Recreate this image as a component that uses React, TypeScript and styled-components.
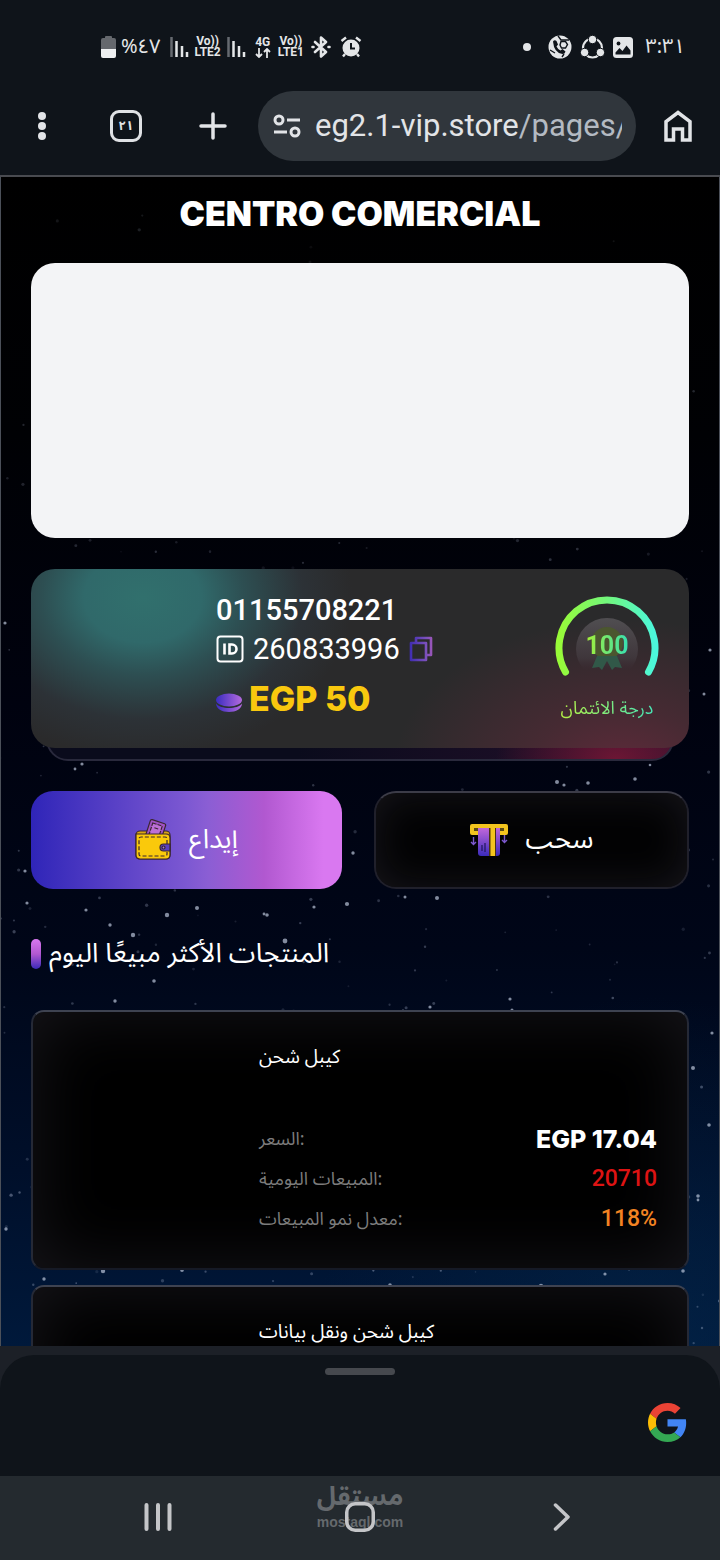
import React from 'react';
import styled, { createGlobalStyle } from 'styled-components';

const arabic = '"Noto Sans Arabic", "DejaVu Sans", sans-serif';

const GlobalStyle = createGlobalStyle`
  *, *::before, *::after { box-sizing: border-box; }
  body { margin: 0; background: #0f141a; color: #fff; font-family: Roboto, ${arabic}; }
  h1, h2, h3, p, dl, dd, dt, ul { margin: 0; padding: 0; font-weight: 400; }
  button { border: 0; padding: 0; background: none; color: inherit; font: inherit; cursor: pointer; }
  svg { display: block; }
`;

const Shell = styled.div`
  display: flex;
  flex-direction: column;
  height: 100vh;
  overflow: hidden;
`;

/* System status bar */
const StatusBar = styled.header`
  display: flex;
  justify-content: space-between;
  align-items: center;
  flex: none;
  height: 90px;
  padding: 4px 35px 0 101px;
  color: #e4e6e8;
`;

const StatusGroup = styled.div<{ $gap: number }>`
  display: flex;
  align-items: center;
  gap: ${(p) => p.$gap}px;
`;

const StatusText = styled.span`
  font: 400 20px/28px ${arabic};
`;

const NetworkLabel = styled.span`
  display: flex;
  flex-direction: column;
  align-items: center;
  font: 700 12px/11px Roboto, sans-serif;
`;

/* Browser toolbar */
const Toolbar = styled.nav`
  display: grid;
  grid-template-columns: 84px 84px 90px 1fr 84px;
  align-items: center;
  flex: none;
  height: 87px;
  padding-bottom: 14px;
  border-bottom: 2px solid #494b50;
`;

const IconButton = styled.button`
  display: grid;
  place-items: center;
  height: 70px;
  color: #e2e4e7;
`;

const TabCount = styled.span`
  display: grid;
  place-items: center;
  width: 32px;
  height: 32px;
  border: 3px solid #dfe1e4;
  border-radius: 9px;
  font: 700 13px/20px ${arabic};
`;

const AddressBar = styled.div`
  display: flex;
  align-items: center;
  gap: 14px;
  height: 70px;
  min-width: 0;
  padding: 0 14px 0 15px;
  border-radius: 35px;
  background: #30363c;
  color: #e2e4e7;
`;

const Url = styled.span`
  flex: 1;
  min-width: 0;
  overflow: hidden;
  white-space: nowrap;
  font-size: 31px;
  line-height: 40px;
`;

const UrlPath = styled.span`
  color: #b4bac2;
`;

/* Web page */
const Page = styled.main`
  position: relative;
  isolation: isolate;
  flex: 1;
  min-height: 0;
  overflow: hidden;
  padding: 0 30px;
  border: solid #4b5059;
  border-width: 0 1px;
  background: linear-gradient(#000 0%, #000104 22%, #00020f 45%, #000618 66%, #000f2a 85%, #00193b 100%);
`;

const Sky = styled.svg`
  position: absolute;
  inset: 0;
  z-index: -1;
  width: 100%;
  height: 100%;
`;

const Title = styled.h1`
  padding: 15px 0 27px;
  text-align: center;
  white-space: nowrap;
  font: 900 34px/44px Inter, sans-serif;
`;

const Banner = styled.div`
  height: 275px;
  border-radius: 24px;
  background: #f3f4f6;
`;

const AccountWrap = styled.section`
  position: relative;
  margin-top: 31px;
  padding-bottom: 13px;
`;

const AccountBase = styled.div`
  position: absolute;
  z-index: -1;
  inset: 60px 15px 0;
  border: 2px solid #29293c;
  border-radius: 22px;
  background: radial-gradient(ellipse 120px 70px at 91% 100%, #6c1634, transparent),
    linear-gradient(90deg, #0a0b1c 40%, #26102c);
`;

const AccountCard = styled.div`
  display: flex;
  justify-content: space-between;
  height: 179px;
  padding: 22px 30px 0 185px;
  border-radius: 24px;
  background: radial-gradient(ellipse 210px 160px at 17% 16%, #31706d 0%, #30696a 28%, rgba(46, 88, 92, 0.8) 48%, rgba(46, 56, 64, 0.55) 76%, transparent 100%),
    radial-gradient(ellipse 230px 150px at 90% 112%, #5f2a3a 0%, rgba(82, 42, 54, 0.7) 40%, transparent 100%),
    #2a2a2b;
`;

const AccountInfo = styled.div`
  display: flex;
  flex-direction: column;
`;

const Phone = styled.p`
  font-weight: 500;
  font-size: 29px;
  line-height: 38px;
`;

const UserId = styled.p`
  display: flex;
  align-items: center;
  gap: 9px;
  font-size: 29px;
  line-height: 40px;
`;

const Balance = styled.p`
  display: flex;
  align-items: center;
  gap: 7px;
  padding-top: 10px;
  color: #f9c80e;
  font: 800 34px/40px Inter, sans-serif;
`;

const Credit = styled.div`
  display: flex;
  flex-direction: column;
  align-items: center;
  width: 104px;
  padding-top: 5px;
`;

const Gauge = styled.div`
  display: grid;
  place-items: center;
  height: 100px;

  > * { grid-area: 1 / 1; }
`;

const Score = styled.span`
  background: linear-gradient(90deg, #a8f034, #35dfb4);
  background-clip: text;
  color: transparent;
  font: 700 25px/40px Roboto, sans-serif;
`;

const CreditLabel = styled.span`
  white-space: nowrap;
  background: linear-gradient(90deg, #b4ef45, #48e6b6);
  background-clip: text;
  color: transparent;
  font: 400 18px/24px ${arabic};
`;

const Actions = styled.div`
  display: grid;
  grid-template-columns: 311fr 315fr;
  gap: 32px;
  margin-top: 30px;
`;

const ActionButton = styled.button<{ $primary?: boolean }>`
  display: flex;
  align-items: center;
  justify-content: center;
  gap: 18px;
  height: 98px;
  border-radius: 22px;
  font: 400 27px/36px ${arabic};
  ${(p) =>
    p.$primary
      ? `background: linear-gradient(90deg, #2f25b8 0%, #7c58d2 50%, #8b5ed4 57%, #b158d0 75%, #d978f0 94%);`
      : `border: 2px solid #20202b;
         border-top-color: #3c3c48;
         background: #030304;
         box-shadow: inset 0 0 40px #17161c;`}
`;

const SectionTitle = styled.h2`
  display: flex;
  align-items: center;
  gap: 8px;
  margin: 43px 0 34px;
  font: 400 27px/44px ${arabic};

  &::before {
    content: '';
    width: 10px;
    height: 30px;
    border-radius: 5px;
    background: linear-gradient(#d978f0, #b158d0 50%, #3a2ab8);
  }
`;

const ProductList = styled.ul`
  display: grid;
  gap: 15px;
  list-style: none;
`;

const ProductCard = styled.li`
  display: grid;
  grid-template-columns: 196px 1fr;
  height: 260px;
  padding: 29px 30px;
  border: 2px solid #252936;
  border-top-color: #3e4351;
  border-bottom-color: #161a26;
  border-radius: 13px;
  background: #000;
  box-shadow: inset 0 0 70px #17161b;
`;

const ProductName = styled.h3`
  font: 400 19px/32px ${arabic};
`;

const Stats = styled.dl`
  display: grid;
  gap: 7px;
  padding-top: 49px;
`;

const Stat = styled.div`
  display: flex;
  justify-content: space-between;
  align-items: center;
  height: 33px;
`;

const StatLabel = styled.dt`
  color: #7c7c7c;
  font: 400 18px/32px ${arabic};
`;

const StatValue = styled.dd<{ $color: string; $strong?: boolean }>`
  color: ${(p) => p.$color};
  font: ${(p) => (p.$strong ? '800 25px/32px Inter, sans-serif' : '500 23px/34px Roboto, sans-serif')};
`;

/* Bottom sheet and system navigation */
const SheetArea = styled.section`
  flex: none;
  padding-top: 9px;
  background: #1c2027;
`;

const Sheet = styled.div`
  position: relative;
  display: flex;
  justify-content: flex-end;
  align-items: flex-end;
  height: 121px;
  padding: 0 33px 34px;
  border-radius: 34px 34px 0 0;
  background: #0f141a;
`;

const Handle = styled.span`
  position: absolute;
  top: 13px;
  left: 50%;
  width: 70px;
  height: 7px;
  margin-left: -35px;
  border-radius: 4px;
  background: #46494e;
`;

const SystemNav = styled.nav`
  position: relative;
  isolation: isolate;
  display: grid;
  grid-template-columns: repeat(3, 1fr);
  flex: none;
  height: 84px;
  padding: 0 8% 2px;
  background: #242a2f;
`;

const NavButton = styled.button`
  display: grid;
  place-items: center;
  color: #c4c5c8;
`;

const Watermark = styled.div`
  position: absolute;
  z-index: -1;
  inset: 4px 0 auto;
  display: flex;
  flex-direction: column;
  align-items: center;
  color: #65696d;
`;

const WatermarkName = styled.span`
  font: 700 26px/34px ${arabic};
`;

const WatermarkSite = styled.span`
  font: 700 14px/16px "Liberation Sans", sans-serif;
`;

/* x, y and radius of the brightest stars */
const brightStars: Array<[number, number, number]> = [
  [5, 446, 1.6], [82, 587, 1.6], [75, 592, 1.4], [710, 473, 1.6], [704, 517, 1.5], [635, 602, 1.8],
  [650, 588, 1.3], [594, 577, 1.4], [25, 694, 1.6], [133, 758, 2.2], [167, 738, 2.2], [197, 731, 2],
  [285, 764, 2.4], [267, 738, 1.8], [264, 737, 1.4], [347, 727, 2.1], [353, 676, 1.7], [154, 804, 1.8],
  [110, 748, 1.7], [86, 733, 1.6], [27, 726, 1.6], [314, 730, 1.6], [557, 605, 2], [564, 608, 1.6],
  [588, 606, 1.8], [437, 721, 2], [405, 720, 1.5], [510, 822, 1.6], [103, 1094, 2.2], [182, 1093, 1.9],
  [44, 1102, 1.7], [390, 1108, 1.8], [541, 1109, 2.2], [683, 1094, 1.8], [605, 1097, 1.6], [693, 891, 2],
  [698, 1019, 1.8], [698, 1023, 1.4], [709, 948, 1.8], [712, 856, 1.6], [6, 1052, 1.7], [115, 824, 1.7],
  [430, 830, 1.6], [403, 834, 1.6], [512, 833, 1.5],
];

const faintStars = Array.from({ length: 420 }, (_, i) => {
  const hash = (n: number) => {
    const v = Math.sin(n * 127.1 + 31.7) * 43758.5453;
    return v - Math.floor(v);
  };
  const y = Math.pow(hash(i + 500), 0.7) * 1240;
  return { x: hash(i) * 720, y, r: 0.8 + hash(i + 1100) * 0.9, o: (0.1 + hash(i + 1900) * 0.3) * (0.4 + y / 1500) };
});

const NightSky = () => (
  <Sky viewBox="0 0 720 1169" preserveAspectRatio="xMidYMin slice" aria-hidden="true">
    <defs>
      <radialGradient id="haze">
        <stop offset="0" stopColor="#04274b" stopOpacity=".55" />
        <stop offset="1" stopColor="#04274b" stopOpacity="0" />
      </radialGradient>
    </defs>
    <ellipse cx="650" cy="1150" rx="330" ry="330" fill="url(#haze)" />
    {faintStars.map((s, i) => (
      <circle key={i} cx={s.x} cy={s.y} r={s.r} fill="#a9b6d0" opacity={s.o} />
    ))}
    {brightStars.map(([x, y, r], i) => (
      <circle key={i} cx={x} cy={y} r={r} fill="#b9c4d8" opacity=".7" />
    ))}
  </Sky>
);

const Battery = () => (
  <svg width="15" height="22" viewBox="0 0 15 22" aria-hidden="true">
    <path d="M4 2V1q0-1 1-1h5q1 0 1 1v1h2q2 0 2 2v9H0V4q0-2 2-2z" fill="#65686d" />
    <path d="M0 13h15v7q0 2-2 2H2q-2 0-2-2z" fill="#eef0f1" />
  </svg>
);

const Signal = () => (
  <svg width="19" height="20" viewBox="0 0 19 20" aria-hidden="true">
    <path d="M1.500 0v20" stroke="#666a70" strokeWidth="2.500" />
    <path d="M6.500 4v16M12 9v11M17 15v5" stroke="#e4e6e8" strokeWidth="2.500" />
  </svg>
);

const DataArrows = () => (
  <svg width="16" height="10" viewBox="0 0 16 10" fill="none" stroke="currentColor" strokeWidth="1.800" aria-hidden="true">
    <path d="M4 0v9M1 6l3 3 3-3M12 10V1M9 4l3-3 3 3" />
  </svg>
);

const Bluetooth = () => (
  <svg width="20" height="22" viewBox="0 0 20 22" fill="none" stroke="currentColor" strokeWidth="2.600" strokeLinejoin="round" strokeLinecap="round" aria-hidden="true">
    <path d="M4 6l11 10-5 4.500V1.500L15 6 4 16" />
    <path d="M1.500 11h1M17.500 11h1" />
  </svg>
);

const Alarm = () => (
  <svg width="22" height="22" viewBox="0 0 22 22" aria-hidden="true">
    <circle cx="11" cy="12" r="8.500" fill="currentColor" />
    <path d="M1.500 5L6 1.500M20.500 5L16 1.500M5 18l-2 2.500M17 18l2 2.500" stroke="currentColor" strokeWidth="2.400" />
    <path d="M11 7v5.500h4" fill="none" stroke="#0f141a" strokeWidth="2" />
  </svg>
);

const CallBadge = () => (
  <svg width="24" height="24" viewBox="0 0 24 24" aria-hidden="true">
    <circle cx="12" cy="12" r="11.500" fill="currentColor" />
    <path d="M5 6.500q1.500-2 3.500-.5L10 9.500l-1.500 2q1.500 3 4 4l2-1.500 3 2.500q-.5 2.500-3 2.500Q6 18 5 6.500z" fill="#0f141a" />
    <path d="M10 .8L13 5h8M14 22l2-3M2 15l5 3" fill="none" stroke="#0f141a" strokeWidth="1.400" />
    <path d="M13 6.500h4.500l2 3-2 3.500h-4L12 10z" fill="none" stroke="#0f141a" strokeWidth="1.400" />
  </svg>
);

const ShareRing = () => (
  <svg width="25" height="24" viewBox="0 0 25 24" aria-hidden="true">
    <circle cx="12.500" cy="13" r="9.500" fill="none" stroke="currentColor" strokeWidth="2.200" />
    <g fill="currentColor" stroke="#0f141a" strokeWidth="1">
      <circle cx="12.500" cy="4.500" r="4.200" />
      <circle cx="4.600" cy="17.500" r="4.200" />
      <circle cx="20.400" cy="17.500" r="4.200" />
    </g>
  </svg>
);

const Picture = () => (
  <svg width="20" height="21" viewBox="0 0 20 21" aria-hidden="true">
    <rect width="20" height="21" rx="3.500" fill="currentColor" />
    <circle cx="5.500" cy="6.500" r="1.900" fill="#0f141a" />
    <path d="M2.500 15.500l4-4.500 3 3 4-5.500 4 5v4h-15z" fill="#0f141a" />
  </svg>
);

const SiteSettings = () => (
  <svg width="28" height="24" viewBox="0 0 28 24" fill="none" stroke="currentColor" strokeWidth="3" aria-hidden="true">
    <circle cx="6" cy="6" r="4" />
    <path d="M14 6h13M1 18h13" />
    <circle cx="22" cy="18" r="4" />
  </svg>
);

const IdBadge = () => (
  <svg width="28" height="28" viewBox="0 0 28 28" fill="none" stroke="#fff" aria-hidden="true">
    <rect x="1.500" y="1.500" width="25" height="25" rx="3" strokeWidth="2" />
    <path d="M8.500 8.500v11M13.500 9.500h2.500a4.500 4.500 0 0 1 0 9h-2.500z" strokeWidth="2.600" />
  </svg>
);

const CopyIcon = () => (
  <svg width="24" height="26" viewBox="0 0 24 26" fill="none" strokeWidth="2.600" strokeLinejoin="round" stroke="url(#copyStroke)" aria-hidden="true">
    <defs>
      <linearGradient id="copyStroke" gradientUnits="userSpaceOnUse" x1="0" y1="13" x2="24" y2="13">
        <stop stopColor="#3c2bb0" />
        <stop offset=".7" stopColor="#7a50bc" />
        <stop offset="1" stopColor="#a057b8" />
      </linearGradient>
    </defs>
    <path d="M7 7V2h15v17h-5M2 7h15v17H2z" />
  </svg>
);

const Coin = () => (
  <svg width="26" height="26" viewBox="0 0 26 26" aria-hidden="true">
    <defs>
      <linearGradient id="coinFill">
        <stop stopColor="#3a2cc0" />
        <stop offset="1" stopColor="#b36add" />
      </linearGradient>
    </defs>
    <path d="M0 17.500c4 6 22 6 26 0 0 5-6 8.500-13 8.500S0 22.500 0 17.500z" fill="url(#coinFill)" />
    <ellipse cx="13" cy="14" rx="13" ry="6.500" fill="url(#coinFill)" />
  </svg>
);

const GaugeArc = () => (
  <svg width="104" height="100" viewBox="0 0 104 100" aria-hidden="true">
    <defs>
      <linearGradient id="arc">
        <stop stopColor="#98fa38" />
        <stop offset=".5" stopColor="#72f77c" />
        <stop offset="1" stopColor="#4bf7dc" />
      </linearGradient>
      <linearGradient id="disc" x2="0" y2="1">
        <stop stopColor="#504e51" />
        <stop offset=".65" stopColor="#3f363b" />
        <stop offset=".85" stopColor="#3b2c33" stopOpacity="0" />
      </linearGradient>
    </defs>
    <path d="M10.500 76A48 48 0 1 1 93.500 76" fill="none" stroke="url(#arc)" strokeWidth="7" strokeLinecap="round" />
    <circle cx="52" cy="53" r="31" fill="url(#disc)" />
    <circle cx="52" cy="47" r="16" fill="#4b562f" />
    <path d="M42 60l-5 12 7-1 3 3 5-9 5 9 3-3 7 1-5-12z" fill="#315848" />
  </svg>
);

const WalletIcon = () => (
  <svg width="36" height="42" viewBox="0 0 36 42" stroke="#3a2630" strokeWidth="1.200" aria-hidden="true">
    <rect x="1" y="12" width="34" height="28" rx="4" fill="#d9a514" />
    <g transform="rotate(18 20 10)">
      <rect x="13" y="2" width="16" height="18" rx="1.500" fill="#a052c4" />
      <rect x="16" y="5" width="10" height="14" fill="#bd70d6" strokeDasharray="4 1" />
      <path d="M19 9h4" />
    </g>
    <path d="M1 15h30q4 0 4 4v17q0 4-4 4H5q-4 0-4-4z" fill="#fac90b" />
    <path d="M32 25v-5q0-2-2-2H6q-2 0-2 2v15q0 2 2 2h24q2 0 2-2v-2" fill="none" strokeWidth="1.200" strokeDasharray="4 2" />
    <path d="M35 25h-6.500a3.500 3.500 0 0 0 0 7H35z" fill="#5941be" />
    <circle cx="28.500" cy="28.500" r="1.500" fill="#9b7fe0" />
  </svg>
);

const WithdrawIcon = () => (
  <svg width="38" height="34" viewBox="0 0 38 34" aria-hidden="true">
    <defs>
      <linearGradient id="cash" x2="0" y2="1">
        <stop stopColor="#c067da" />
        <stop offset="1" stopColor="#3b2bbb" />
      </linearGradient>
    </defs>
    <path d="M2 1h34q2 0 2 2v7q0 2-2 2h-6V8h3V5H5v3h3v4H2q-2 0-2-2V3q0-2 2-2z" fill="#f3c41e" />
    <path d="M4 5h30v3H4z" fill="#5a4a13" />
    <path d="M8 5h22v25q0 3-3 3H11q-3 0-3-3z" fill="url(#cash)" />
    <path d="M19 5h7v28h-7z" fill="#4b3211" />
    <path d="M20.500 5H25v28h-4.500z" fill="#f3c41e" />
    <path d="M12 22v6M15 20v9" stroke="#20145b" strokeWidth="1.200" />
    <path d="M3.500 14v7M1 19l2.500 2.500L6 19M34.500 12v7M32 17l2.500 2.500L37 17" fill="none" stroke="#7d59cf" strokeWidth="1.400" />
  </svg>
);

const GoogleLogo = () => (
  <svg width="39" height="39" viewBox="0 0 48 48" aria-label="Google">
    <path fill="#ea4335" d="M24 9.500c3.540 0 6.710 1.220 9.210 3.600l6.850-6.850C35.900 2.380 30.470 0 24 0 14.620 0 6.510 5.380 2.560 13.220l7.980 6.190C12.430 13.720 17.740 9.500 24 9.500z" />
    <path fill="#4285f4" d="M46.980 24.550c0-1.570-.15-3.090-.38-4.550H24v9.020h12.940c-.58 2.960-2.260 5.480-4.780 7.180l7.730 6c4.510-4.180 7.090-10.360 7.090-17.650z" />
    <path fill="#fbbc05" d="M10.530 28.590c-.48-1.450-.76-2.990-.76-4.590s.27-3.140.76-4.590l-7.980-6.190C.92 16.460 0 20.120 0 24s.92 7.540 2.560 10.780l7.970-6.190z" />
    <path fill="#34a853" d="M24 48c6.480 0 11.930-2.130 15.890-5.810l-7.730-6c-2.150 1.450-4.920 2.300-8.160 2.300-6.260 0-11.570-4.220-13.470-9.910l-7.980 6.190C6.510 42.620 14.620 48 24 48z" />
  </svg>
);

interface Product {
  name: string;
  stats?: { price: string; sales: string; growth: string };
}

const products: Product[] = [
  { name: 'كيبل شحن', stats: { price: 'EGP 17.04', sales: '20710', growth: '118%' } },
  { name: 'كيبل شحن ونقل بيانات' },
];

export default function App() {
  return (
    <Shell>
      <GlobalStyle />
      <StatusBar>
        <StatusGroup $gap={9}>
          <StatusGroup $gap={5}>
            <Battery />
            <StatusText>%٤٧</StatusText>
          </StatusGroup>
          <StatusGroup $gap={6}>
            <Signal />
            <NetworkLabel><span>Vo))</span><span>LTE2</span></NetworkLabel>
            <Signal />
          </StatusGroup>
          <StatusGroup $gap={7}>
            <NetworkLabel><span>4G</span><DataArrows /></NetworkLabel>
            <NetworkLabel><span>Vo))</span><span>LTE1</span></NetworkLabel>
            <Bluetooth />
          </StatusGroup>
          <Alarm />
        </StatusGroup>
        <StatusGroup $gap={12}>
          <StatusGroup $gap={8}>
            <svg width="18" height="8" viewBox="0 0 18 8" aria-hidden="true"><circle cx="5" cy="4" r="4" fill="currentColor" /></svg>
            <CallBadge />
            <ShareRing />
            <Picture />
          </StatusGroup>
          <StatusText>٣:٣١</StatusText>
        </StatusGroup>
      </StatusBar>

      <Toolbar aria-label="Browser">
        <IconButton aria-label="Menu">
          <svg width="8" height="28" viewBox="0 0 8 28" fill="currentColor"><circle cx="4" cy="4" r="4" /><circle cx="4" cy="14" r="4" /><circle cx="4" cy="24" r="4" /></svg>
        </IconButton>
        <IconButton aria-label="Tabs"><TabCount>٢١</TabCount></IconButton>
        <IconButton aria-label="New tab">
          <svg width="28" height="28" viewBox="0 0 28 28" stroke="currentColor" strokeWidth="3.500" strokeLinecap="round"><path d="M14 2v24M2 14h24" /></svg>
        </IconButton>
        <AddressBar>
          <SiteSettings />
          <Url>eg2.1-vip.store<UrlPath>/pages/</UrlPath></Url>
        </AddressBar>
        <IconButton aria-label="Home">
          <svg width="28" height="32" viewBox="0 0 28 32" fill="none" stroke="currentColor" strokeWidth="3.500"><path d="M2 30V11.500L14 2.500l12 9V30h-7.500V19h-9v11z" /></svg>
        </IconButton>
      </Toolbar>

      <Page>
        <NightSky />
        <Title>CENTRO COMERCIAL</Title>
        <Banner />
        <AccountWrap>
          <AccountBase />
          <AccountCard>
            <AccountInfo>
              <Phone>01155708221</Phone>
              <UserId>
                <IdBadge />
                260833996
                <button aria-label="Copy"><CopyIcon /></button>
              </UserId>
              <Balance><Coin />EGP 50</Balance>
            </AccountInfo>
            <Credit>
              <Gauge><GaugeArc /><Score>100</Score></Gauge>
              <CreditLabel>درجة الائتمان</CreditLabel>
            </Credit>
          </AccountCard>
        </AccountWrap>
        <Actions>
          <ActionButton $primary><WalletIcon />إيداع</ActionButton>
          <ActionButton><WithdrawIcon />سحب</ActionButton>
        </Actions>
        <SectionTitle>المنتجات الأكثر مبيعًا اليوم</SectionTitle>
        <ProductList>
          {products.map(({ name, stats }) => (
            <ProductCard key={name}>
              <span />
              <div>
                <ProductName>{name}</ProductName>
                {stats && (
                  <Stats>
                    <Stat><StatLabel>السعر:</StatLabel><StatValue $color="#fff" $strong>{stats.price}</StatValue></Stat>
                    <Stat><StatLabel>المبيعات اليومية:</StatLabel><StatValue $color="#dd1313">{stats.sales}</StatValue></Stat>
                    <Stat><StatLabel>معدل نمو المبيعات:</StatLabel><StatValue $color="#f28322">{stats.growth}</StatValue></Stat>
                  </Stats>
                )}
              </div>
            </ProductCard>
          ))}
        </ProductList>
      </Page>

      <SheetArea>
        <Sheet><Handle /><GoogleLogo /></Sheet>
      </SheetArea>
      <SystemNav aria-label="System">
        <Watermark><WatermarkName>مستقل</WatermarkName><WatermarkSite>mostaql.com</WatermarkSite></Watermark>
        <NavButton aria-label="Recents">
          <svg width="28" height="28" viewBox="0 0 28 28" stroke="currentColor" strokeWidth="4" strokeLinecap="round"><path d="M2.500 2v24M14 2v24M25.500 2v24" /></svg>
        </NavButton>
        <NavButton aria-label="Home">
          <svg width="30" height="30" viewBox="0 0 30 30" fill="none" stroke="currentColor" strokeWidth="3.500"><rect x="1.750" y="1.750" width="26.500" height="26.500" rx="8.500" /></svg>
        </NavButton>
        <NavButton aria-label="Back">
          <svg width="18" height="28" viewBox="0 0 18 28" fill="none" stroke="currentColor" strokeWidth="3.500" strokeLinecap="round" strokeLinejoin="round"><path d="M2.500 2L15 14 2.500 26" /></svg>
        </NavButton>
      </SystemNav>
    </Shell>
  );
}
